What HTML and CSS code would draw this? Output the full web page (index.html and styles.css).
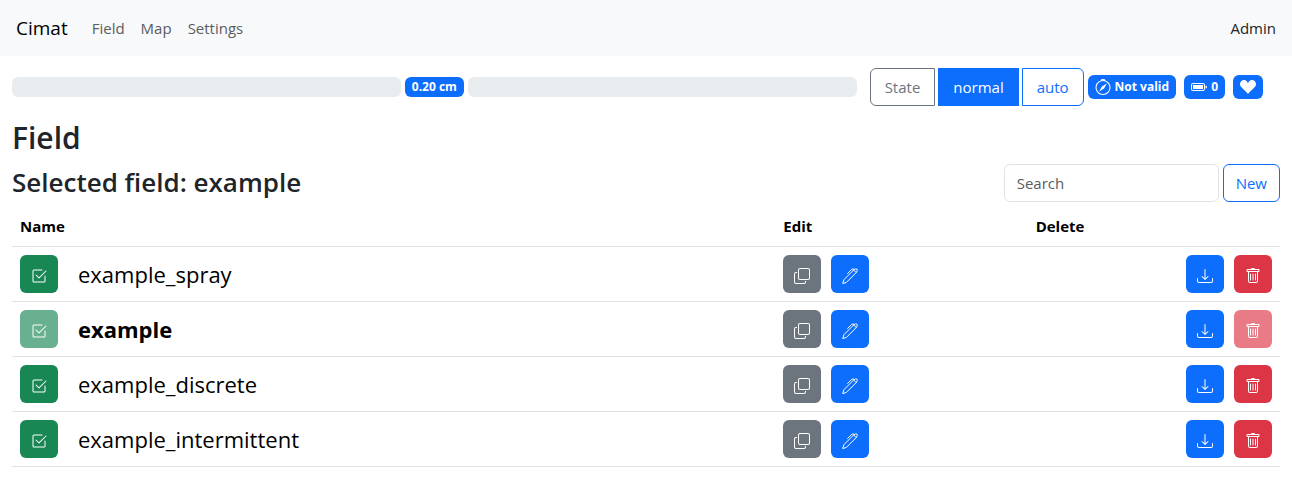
FILE: index.html
```html
<!DOCTYPE html>
<html lang="en">
<head>
<meta charset="utf-8">
<meta name="viewport" content="width=device-width, initial-scale=1">
<title>Cimat</title>
<link rel="stylesheet" href="styles.css">
</head>
<body>
<svg class="sprite" aria-hidden="true">
  <symbol id="check" viewBox="0 0 16 16"><path d="M3 14.5A1.5 1.5 0 0 1 1.5 13V3A1.5 1.5 0 0 1 3 1.5h8a.5.5 0 0 1 0 1H3a.5.5 0 0 0-.5.5v10a.5.5 0 0 0 .5.5h10a.5.5 0 0 0 .5-.5V8a.5.5 0 0 1 1 0v5a1.5 1.5 0 0 1-1.5 1.5z"/><path d="m8.354 10.354 7-7a.5.5 0 0 0-.708-.708L8 9.293 5.354 6.646a.5.5 0 1 0-.708.708l3 3a.5.5 0 0 0 .708 0"/></symbol>
  <symbol id="copy" viewBox="0 0 16 16"><path fill-rule="evenodd" d="M4 2a2 2 0 0 1 2-2h8a2 2 0 0 1 2 2v8a2 2 0 0 1-2 2H6a2 2 0 0 1-2-2zm2-1a1 1 0 0 0-1 1v8a1 1 0 0 0 1 1h8a1 1 0 0 0 1-1V2a1 1 0 0 0-1-1zM2 5a1 1 0 0 0-1 1v8a1 1 0 0 0 1 1h8a1 1 0 0 0 1-1v-1h1v1a2 2 0 0 1-2 2H2a2 2 0 0 1-2-2V6a2 2 0 0 1 2-2h1v1z"/></symbol>
  <symbol id="pen" viewBox="0 0 16 16"><path fill="none" stroke="currentColor" stroke-linecap="round" stroke-linejoin="round" d="M.8 15.2 2 11.6 11.6 2Q13.6.2 15 1.2 16 2.6 14.2 4.6L4.6 14.2zM12.2 1.4Q10.8.2 9.6 1.4L5.6 5.4M11.6 2l2.4 2.4"/></symbol>
  <symbol id="download" viewBox="0 0 16 16"><path d="M.5 9.9a.5.5 0 0 1 .5.5v2.5a1 1 0 0 0 1 1h12a1 1 0 0 0 1-1v-2.5a.5.5 0 0 1 1 0v2.5a2 2 0 0 1-2 2H2a2 2 0 0 1-2-2v-2.5a.5.5 0 0 1 .5-.5"/><path d="M7.646 11.854a.5.5 0 0 0 .708 0l3-3a.5.5 0 0 0-.708-.708L8.5 10.293V1.5a.5.5 0 0 0-1 0v8.793L5.354 8.146a.5.5 0 1 0-.708.708z"/></symbol>
  <symbol id="trash" viewBox="0 0 16 16"><path d="M5.5 5.5A.5.5 0 0 1 6 6v6a.5.5 0 0 1-1 0V6a.5.5 0 0 1 .5-.5m2.5 0a.5.5 0 0 1 .5.5v6a.5.5 0 0 1-1 0V6a.5.5 0 0 1 .5-.5m3 .5a.5.5 0 0 0-1 0v6a.5.5 0 0 0 1 0z"/><path d="M14.5 3a1 1 0 0 1-1 1H13v9a2 2 0 0 1-2 2H5a2 2 0 0 1-2-2V4h-.5a1 1 0 0 1-1-1V2a1 1 0 0 1 1-1H6a1 1 0 0 1 1-1h2a1 1 0 0 1 1 1h3.5a1 1 0 0 1 1 1zM4.118 4 4 4.059V13a1 1 0 0 0 1 1h6a1 1 0 0 0 1-1V4.059L11.882 4zM2.5 3h11V2h-11z"/></symbol>
  <symbol id="compass" viewBox="0 0 16 16"><path d="M8 16.016a7.5 7.5 0 0 0 1.962-14.74A1 1 0 0 0 9 0H7a1 1 0 0 0-.962 1.276A7.5 7.5 0 0 0 8 16.016m6.5-7.5a6.5 6.5 0 1 1-13 0 6.5 6.5 0 0 1 13 0"/><path d="m6.94 7.44 4.95-2.83-2.83 4.95-4.949 2.83z"/></symbol>
  <symbol id="battery" viewBox="0 0 16 16"><path d="M2 6h10v4H2z"/><path d="M2 4a2 2 0 0 0-2 2v4a2 2 0 0 0 2 2h10a2 2 0 0 0 2-2V6a2 2 0 0 0-2-2zm10 1a1 1 0 0 1 1 1v4a1 1 0 0 1-1 1H2a1 1 0 0 1-1-1V6a1 1 0 0 1 1-1zm4 3a1.5 1.5 0 0 1-1.5 1.5v-3A1.5 1.5 0 0 1 16 8"/></symbol>
  <symbol id="heart" viewBox="0 0 16 16"><path d="M4 1c2.21 0 4 1.755 4 3.92C8 2.755 9.79 1 12 1s4 1.755 4 3.92c0 3.263-3.234 4.414-7.608 9.608a.513.513 0 0 1-.784 0C3.234 9.334 0 8.183 0 4.92 0 2.755 1.79 1 4 1"/></symbol>
</svg>

<nav class="navbar">
  <a class="brand" href="#">Cimat</a>
  <a class="nav-link" href="#">Field</a>
  <a class="nav-link" href="#">Map</a>
  <a class="nav-link" href="#">Settings</a>
  <span class="user">Admin</span>
</nav>

<main class="page">
  <section class="status">
    <div class="offset">
      <div class="progress"></div>
      <span class="badge small">0.20 cm</span>
      <div class="progress"></div>
    </div>
    <div class="tools">
      <div class="group">
        <button class="btn state" type="button" disabled>State</button>
        <button class="btn primary" type="button">normal</button>
        <button class="btn outline" type="button">auto</button>
      </div>
      <div class="badges">
        <span class="badge"><svg class="icon"><use href="#compass"/></svg>Not valid</span>
        <span class="badge"><svg class="icon"><use href="#battery"/></svg>0</span>
        <span class="badge"><svg class="icon"><use href="#heart"/></svg></span>
      </div>
    </div>
  </section>

  <h1>Field</h1>
  <header class="list-head">
    <h2>Selected field: example</h2>
    <form class="search">
      <input type="search" placeholder="Search" aria-label="Search">
      <button class="btn outline" type="button">New</button>
    </form>
  </header>

  <table class="fields">
    <thead>
      <tr><th class="name-col">Name</th><th>Edit</th><th>Delete</th></tr>
    </thead>
    <tbody>
      <tr>
        <td><div class="cell name"><button class="btn square green" type="button" aria-label="Select"><svg class="icon"><use href="#check"/></svg></button><span>example_spray</span></div></td>
        <td><div class="cell"><button class="btn square gray" type="button" aria-label="Copy"><svg class="icon"><use href="#copy"/></svg></button><button class="btn square primary" type="button" aria-label="Edit"><svg class="icon"><use href="#pen"/></svg></button></div></td>
        <td><div class="cell end"><button class="btn square primary" type="button" aria-label="Download"><svg class="icon"><use href="#download"/></svg></button><button class="btn square red" type="button" aria-label="Delete"><svg class="icon"><use href="#trash"/></svg></button></div></td>
      </tr>
      <tr>
        <td><div class="cell name"><button class="btn square green" type="button" aria-label="Select" disabled><svg class="icon"><use href="#check"/></svg></button><strong>example</strong></div></td>
        <td><div class="cell"><button class="btn square gray" type="button" aria-label="Copy"><svg class="icon"><use href="#copy"/></svg></button><button class="btn square primary" type="button" aria-label="Edit"><svg class="icon"><use href="#pen"/></svg></button></div></td>
        <td><div class="cell end"><button class="btn square primary" type="button" aria-label="Download"><svg class="icon"><use href="#download"/></svg></button><button class="btn square red" type="button" aria-label="Delete" disabled><svg class="icon"><use href="#trash"/></svg></button></div></td>
      </tr>
      <tr>
        <td><div class="cell name"><button class="btn square green" type="button" aria-label="Select"><svg class="icon"><use href="#check"/></svg></button><span>example_discrete</span></div></td>
        <td><div class="cell"><button class="btn square gray" type="button" aria-label="Copy"><svg class="icon"><use href="#copy"/></svg></button><button class="btn square primary" type="button" aria-label="Edit"><svg class="icon"><use href="#pen"/></svg></button></div></td>
        <td><div class="cell end"><button class="btn square primary" type="button" aria-label="Download"><svg class="icon"><use href="#download"/></svg></button><button class="btn square red" type="button" aria-label="Delete"><svg class="icon"><use href="#trash"/></svg></button></div></td>
      </tr>
      <tr>
        <td><div class="cell name"><button class="btn square green" type="button" aria-label="Select"><svg class="icon"><use href="#check"/></svg></button><span>example_intermittent</span></div></td>
        <td><div class="cell"><button class="btn square gray" type="button" aria-label="Copy"><svg class="icon"><use href="#copy"/></svg></button><button class="btn square primary" type="button" aria-label="Edit"><svg class="icon"><use href="#pen"/></svg></button></div></td>
        <td><div class="cell end"><button class="btn square primary" type="button" aria-label="Download"><svg class="icon"><use href="#download"/></svg></button><button class="btn square red" type="button" aria-label="Delete"><svg class="icon"><use href="#trash"/></svg></button></div></td>
      </tr>
    </tbody>
  </table>
</main>
</body>
</html>
```
FILE: styles.css
```css
* { box-sizing: border-box; }

body {
  margin: 0;
  background: #fff;
  color: #212529;
  font: 15px/24px "Segoe UI", "Open Sans", "Noto Sans", sans-serif;
}

.sprite { display: none; }
.icon { width: 16px; height: 16px; fill: currentColor; flex: none; }

.navbar {
  display: flex;
  align-items: center;
  gap: 16px;
  padding: 16px;
  background: #f8f9fa;
}
.navbar a { text-decoration: none; }
.brand { margin-right: 8px; font-size: 19px; color: #000; }
.nav-link { color: #5b5d5f; }
.user { margin-left: auto; }

.page { padding: 12px; }

.status { display: flex; align-items: center; gap: 13px; }
.offset { flex: 1; display: flex; align-items: center; gap: 4px; }
.progress { flex: 1; height: 20px; border-radius: 6px; background: #e9ecef; }
.tools { display: flex; align-items: center; gap: 4px; padding-right: 17px; }
.group { display: flex; gap: 3px; }
.badges { display: flex; gap: 8px; }

.badge {
  display: flex;
  align-items: center;
  gap: 4px;
  height: 24px;
  padding: 0 7px;
  border-radius: 6px;
  background: #0d6efd;
  color: #fff;
  font-size: 12px;
  font-weight: 700;
  white-space: nowrap;
}
.badge.small { height: 20px; }

.btn {
  height: 38px;
  padding: 0 12px;
  border: 1px solid transparent;
  border-radius: 6px;
  background: transparent;
  color: #fff;
  font: inherit;
}
.primary { background: #0d6efd; }
.green { background: #198754; }
.gray { background: #6c757d; }
.red { background: #dc3545; }
.outline { border-color: #0d6efd; color: #0d6efd; }
.state { border-color: #6c757d; color: #6c757d; }

.group .btn { padding: 0 14px; border-radius: 0; }
.group .btn:first-child { border-radius: 6px 0 0 6px; }
.group .btn:last-child { border-radius: 0 6px 6px 0; }

.square {
  display: flex;
  justify-content: center;
  width: 38px;
  padding: 12px 0 8px;
}
.square:disabled { opacity: 0.65; }

h1, h2 { margin: 0; font-weight: 600; }
h1 { margin-top: 13px; font-size: 30px; line-height: 38px; }
h2 { font-size: 26px; line-height: 36px; }

.list-head {
  display: flex;
  justify-content: space-between;
  align-items: flex-start;
  margin-top: 7px;
}
.search { display: flex; gap: 4px; }
.search input {
  width: 215px;
  height: 38px;
  padding: 0 12px;
  border: 1px solid #dee2e6;
  border-radius: 6px;
  background: #fff;
  font: inherit;
  appearance: none;
}
.search input::placeholder { color: #595c5f; opacity: 1; }

.fields {
  width: 100%;
  margin-top: 4px;
  border-spacing: 0;
  table-layout: fixed;
  color: #000;
}
.fields th, .fields td { padding: 8px; border-bottom: 1px solid #dee2e6; }
.fields th { text-align: left; font-weight: 700; }
.name-col { width: 60.2%; }
.cell { display: flex; align-items: center; gap: 10px; }
.cell.name { gap: 20px; font-size: 22px; }
.cell.end { justify-content: flex-end; }
```
